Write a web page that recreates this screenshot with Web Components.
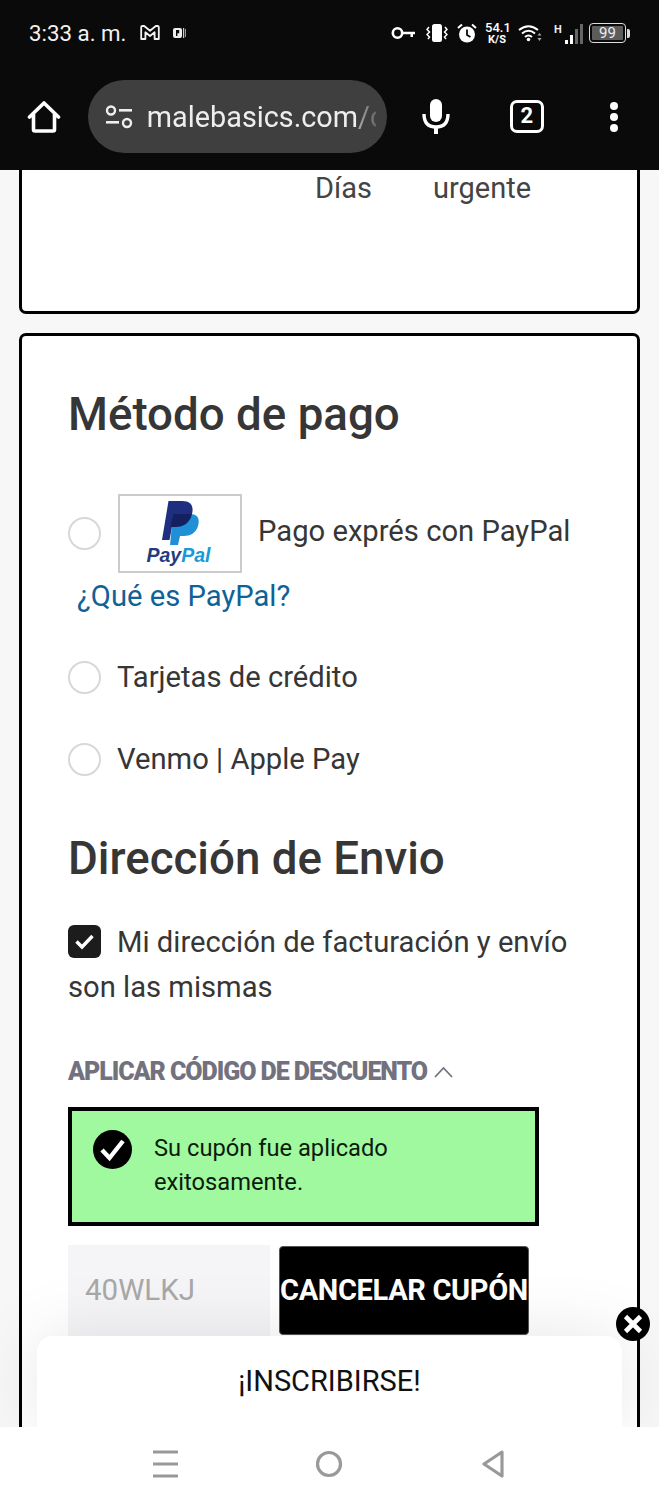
<!DOCTYPE html>
<html lang="es">
<head>
<meta charset="UTF-8">
<title>Método de pago</title>
<style>
  html, body { margin: 0; padding: 0; }
  body { font-family: Roboto, "Liberation Sans", sans-serif; background: #fff; color: #333; }
  .shell { width: 659px; height: 1500px; display: flex; flex-direction: column; overflow: hidden; }
  .title { font-size: 45.7px; font-weight: 500; line-height: 52px; margin: 0; color: #363636; }
</style>
</head>
<body>
<div class="shell">
  <browser-chrome url="malebasics.com/c" tabs="2"></browser-chrome>
  <page-view>
    <info-card>
      <delivery-row></delivery-row>
    </info-card>
    <info-card main>
      <h2 class="title" style="margin-bottom:53px">Método de pago</h2>
      <pay-option logo>Pago exprés con PayPal</pay-option>
      <pay-link>¿Qué es PayPal?</pay-link>
      <pay-option style="margin-top:37px">Tarjetas de crédito</pay-option>
      <pay-option style="margin-top:37px">Venmo | Apple Pay</pay-option>
      <h2 class="title" style="margin-top:51px;margin-bottom:35px">Dirección de Envio</h2>
      <same-address>Mi dirección de facturación y envío son las mismas</same-address>
      <coupon-toggle>APLICAR CÓDIGO DE DESCUENTO</coupon-toggle>
      <coupon-alert>Su cupón fue aplicado exitosamente.</coupon-alert>
      <coupon-form code="40WLKJ">CANCELAR CUPÓN</coupon-form>
    </info-card>
    <subscribe-popup>¡INSCRIBIRSE!</subscribe-popup>
  </page-view>
  <nav-bar></nav-bar>
</div>

<script>
  function shadow(el, html) {
    el.attachShadow({ mode: 'open' }).innerHTML = html;
  }

  class BrowserChrome extends HTMLElement {
    connectedCallback() {
      shadow(this, `
        <style>
          :host { display: block; height: 170px; flex: none; background: #0a0a0a; color: #fff; font-family: Roboto, sans-serif; }
          svg { display: block; }
          .status { height: 66px; display: flex; align-items: center; padding: 0 29px 0 29px; box-sizing: border-box; }
          .time { font-size: 22.3px; color: #f2f2f2; margin-right: 13px; }
          .spacer { flex: 1; }
          .speed { font-size: 11px; font-weight: 700; line-height: 11px; text-align: center; width: 24px; margin: 0 9px 0 8px; }
          .speed b { display: block; font-size: 13px; font-weight: 500; line-height: 12px; }
          .batt { width: 37px; height: 20px; border: 1px solid #ddd; border-radius: 4px; box-sizing: border-box; padding: 2px; margin-left: 4px; }
          .batt span { display: block; height: 100%; background: #5c5c5c; border-radius: 1px; font-size: 15px; line-height: 14px; text-align: center; color: #eee; }
          .nub { width: 3px; height: 9px; background: #ddd; border-radius: 0 2px 2px 0; margin-left: 1px; }
          .bar { height: 104px; display: flex; align-items: flex-start; padding: 14px 0 0 0; box-sizing: border-box; }
          .home { width: 88px; height: 73px; display: flex; align-items: center; justify-content: center; }
          .omni { width: 300px; height: 73px; background: #3f3f3f; border-radius: 37px; display: flex; align-items: center; padding-left: 17px; box-sizing: border-box; overflow: hidden; }
          .url { font-size: 28.8px; color: #eee; margin-left: 14px; width: 229px; white-space: nowrap; flex: none; -webkit-mask-image: linear-gradient(to right, #000 92%, rgba(0,0,0,.35) 100%); mask-image: linear-gradient(to right, #000 92%, rgba(0,0,0,.35) 100%); }
          .url i { font-style: normal; color: #aaa; }
          .act { display: flex; align-items: center; justify-content: center; height: 73px; }
          .tab { width: 34px; height: 33px; border: 3.5px solid #fff; border-radius: 7px; box-sizing: border-box; font-size: 22px; font-weight: 700; line-height: 26px; text-align: center; }
        </style>
        <div class="status">
          <span class="time">3:33 a. m.</span>
          <svg width="20" height="16" viewBox="0 0 20 16" style="margin-right:13px"><path d="M1.2 2.2 Q1.2 1 2.4 1 H4.2 L10 5.8 L15.8 1 H17.6 Q18.8 1 18.8 2.2 V14 H14.6 V7.2 L10 11 L5.4 7.2 V14 H1.2 Z" fill="none" stroke="#f2f2f2" stroke-width="1.8" stroke-linejoin="round"/></svg>
          <svg width="13" height="12" viewBox="0 0 13 12"><rect x="0" y="1" width="9" height="10" rx="2" fill="#eee"/><path d="M3 9 V3 H6.2 V6.2 H4.4 V9 Z" fill="#0a0a0a"/><rect x="10" y="1" width="1.2" height="10" fill="#ccc"/><rect x="12" y="2" width="1" height="8" fill="#999"/></svg>
          <span class="spacer"></span>
          <svg width="24" height="14" viewBox="0 0 24 14" style="margin-right:11px"><circle cx="6.5" cy="7" r="4.7" fill="none" stroke="#fff" stroke-width="2.6"/><path d="M11 5.7 H24 V8.3 H22 V11 H19.5 V8.3 H11 Z" fill="#fff"/></svg>
          <svg width="22" height="20" viewBox="0 0 22 20" style="margin-right:9px"><rect x="6" y="1" width="10" height="18" rx="2.5" fill="#fff"/><path d="M3 4 L1 6.5 L3.5 9 L1 11.5 L3.5 14 L2 16 M19 4 L21 6.5 L18.5 9 L21 11.5 L18.5 14 L20 16" fill="none" stroke="#fff" stroke-width="1.5"/></svg>
          <svg width="20" height="21" viewBox="0 0 20 21"><circle cx="10" cy="11.5" r="8" fill="#fff"/><path d="M10 6.5 V12 L13.5 14" fill="none" stroke="#0a0a0a" stroke-width="1.8"/><path d="M1 5 L5 1.5 M19 5 L15 1.5" stroke="#fff" stroke-width="2"/></svg>
          <span class="speed"><b>54.1</b>K/S</span>
          <svg width="24" height="18" viewBox="0 0 24 18" style="margin-right:12px"><path d="M1 6 Q10.5 -1.5 20 6 M4 9.5 Q10.5 4 17 9.5 M7 13 Q10.5 10 14 13" fill="none" stroke="#fff" stroke-width="2"/><circle cx="10.5" cy="15.5" r="1.8" fill="#fff"/><path d="M21.5 9 L23.5 11.5 H19.5 Z M21.5 17 L23.5 14 H19.5 Z" fill="#aaa"/></svg>
          <svg width="31" height="21" viewBox="0 0 31 21"><text x="0" y="10" fill="#eee" font-size="11" font-weight="700" font-family="Roboto">H</text><rect x="11" y="17" width="3" height="4" fill="#fff"/><rect x="16" y="12" width="3" height="9" fill="#fff"/><rect x="21" y="6" width="3" height="15" fill="#666"/><rect x="26" y="1" width="3" height="20" fill="#666"/></svg>
          <div class="batt"><span>99</span></div>
          <div class="nub"></div>
        </div>
        <div class="bar">
          <div class="home">
            <svg width="34" height="34" viewBox="0 0 34 34"><path d="M2.5 17 L17 3 L31.5 17 M6.5 14 V29.5 Q6.5 31 8 31 H26 Q27.5 31 27.5 29.5 V14" fill="none" stroke="#fff" stroke-width="3.6" stroke-linejoin="round" stroke-linecap="round"/></svg>
          </div>
          <div class="omni">
            <svg width="28" height="24" viewBox="0 0 28 24" style="flex:none"><circle cx="6" cy="5.5" r="4" fill="none" stroke="#eee" stroke-width="2.4"/><rect x="14" y="4" width="13" height="2.6" fill="#eee"/><rect x="1" y="16" width="13" height="2.6" fill="#eee"/><circle cx="22" cy="18" r="4" fill="none" stroke="#eee" stroke-width="2.4"/></svg>
            <span class="url">${this.getAttribute('url').replace('/c', '<i>/c</i>')}</span>
          </div>
          <div class="act" style="width:97px">
            <svg width="28" height="36" viewBox="0 0 28 36"><rect x="8" y="0" width="12" height="23" rx="6" fill="#fff"/><path d="M2 15 Q2 28 14 28 Q26 28 26 15" fill="none" stroke="#fff" stroke-width="3.4"/><rect x="12" y="28" width="4" height="7" fill="#fff"/></svg>
          </div>
          <div class="act" style="width:85px"><div class="tab">${this.getAttribute('tabs')}</div></div>
          <div class="act" style="width:90px">
            <svg width="10" height="32" viewBox="0 0 10 32"><circle cx="5" cy="5" r="4" fill="#fff"/><circle cx="5" cy="16" r="4" fill="#fff"/><circle cx="5" cy="27" r="4" fill="#fff"/></svg>
          </div>
        </div>`);
    }
  }

  class PageView extends HTMLElement {
    connectedCallback() {
      shadow(this, `
        <style>
          :host { display: flex; flex-direction: column; gap: 19px; flex: 1; min-height: 0; overflow: hidden; position: relative; background: #f7f7f7; padding: 0 19px; box-sizing: border-box; }
        </style>
        <slot></slot>`);
    }
  }

  class InfoCard extends HTMLElement {
    connectedCallback() {
      shadow(this, `
        <style>
          :host { display: block; flex: none; background: #fff; border: 3px solid #000; border-radius: 7px; box-sizing: border-box; font-family: Roboto, sans-serif; color: #333; }
          :host(:not([main])) { height: 154px; margin-top: -10px; }
          :host([main]) { padding: 53px 47px 0 46px; height: 1200px; }
        </style>
        <slot></slot>`);
    }
  }

  class DeliveryRow extends HTMLElement {
    connectedCallback() {
      shadow(this, `
        <style>
          :host { display: flex; padding: 8px 0 0 293px; font-size: 29px; line-height: 38px; margin-top: -2px; color: #444; }
          .days { width: 118px; flex: none; }
        </style>
        <span class="days">Días</span><span>urgente</span>`);
    }
  }

  class PayOption extends HTMLElement {
    connectedCallback() {
      const withLogo = this.hasAttribute('logo');
      const logo = withLogo ? `
        <div class="logo">
          <svg width="37" height="44" viewBox="0 0 37 44"><path d="M6.5 0 H20 C29 0 32 5 30 13 C28 22 21 26 14 26 H10 L7.5 39 H0 Z" fill="#1d2f7e"/><path d="M11 13 H28 C36 13 38 18 36 25 C34 32 28 35 22 35 H18 L16 44 H8 Z" fill="#1f8fd6"/><path d="M11 13 H30 C28 22 21 26 14 26 H8.5 Z" fill="#14205f"/></svg>
          <span><b>Pay</b><i>Pal</i></span>
        </div>` : '';
      shadow(this, `
        <style>
          :host { display: flex; align-items: center; font-size: 29.2px; line-height: 45px; color: #363636; font-family: Roboto, sans-serif; }
          .radio { width: 33px; height: 33px; border: 2px solid #d8d8d8; border-radius: 50%; box-sizing: border-box; background: #fff; margin-right: 17px; flex: none; }
          .logo { width: 124px; height: 79px; border: 2px solid #ccc; box-sizing: border-box; background: #fff; margin-right: 17px; flex: none; display: flex; flex-direction: column; align-items: center; padding-top: 5px; }
          .logo svg { display: block; margin-left: 1px; }
          .logo span { font: italic 700 19.5px/20px "Liberation Sans", sans-serif; margin-left: -3px; }
          .logo b { color: #253b80; font-weight: 700; }
          .logo i { color: #179bd7; }
          .label { margin-left: -1px; }
          .label.up { margin-top: -4px; }
        </style>
        <div class="radio"></div>${logo}<span class="label${withLogo ? ' up' : ''}"><slot></slot></span>`);
    }
  }

  class PayLink extends HTMLElement {
    connectedCallback() {
      shadow(this, `
        <style>
          :host { display: block; font-size: 29.2px; line-height: 44px; color: #0f6296; padding-left: 9px; margin-top: 1px; font-family: Roboto, sans-serif; }
        </style>
        <slot></slot>`);
    }
  }

  class SameAddress extends HTMLElement {
    connectedCallback() {
      shadow(this, `
        <style>
          :host { display: block; font-size: 29.2px; line-height: 44.5px; color: #363636; font-family: Roboto, sans-serif; }
          .box { display: inline-block; width: 33px; height: 33px; border-radius: 6px; background: #1c1c1c; margin-right: 16px; vertical-align: -6px; }
          svg { display: block; margin: 8px 6px; }
        </style>
        <span class="box"><svg width="21" height="17" viewBox="0 0 21 17"><path d="M2.5 8.5 L8 14 L18.5 3" fill="none" stroke="#fff" stroke-width="3.4"/></svg></span><slot></slot>`);
    }
  }

  class CouponToggle extends HTMLElement {
    connectedCallback() {
      shadow(this, `
        <style>
          :host { display: flex; align-items: center; font-size: 25px; font-weight: 900; line-height: 30px; letter-spacing: -1.05px; color: #72727f; margin-top: 48px; font-family: Roboto, sans-serif; white-space: nowrap; }
          svg { margin-left: 7px; flex: none; }
        </style>
        <slot></slot>
        <svg width="19" height="12" viewBox="0 0 19 12"><path d="M1 11 L9.5 2 L18 11" fill="none" stroke="#72727f" stroke-width="1.8"/></svg>`);
    }
  }

  class CouponAlert extends HTMLElement {
    connectedCallback() {
      shadow(this, `
        <style>
          :host { display: flex; width: 471px; height: 119px; box-sizing: border-box; border: 4px solid #000; background: #a0f99f; margin-top: 20px; padding: 19px 0 0 21px; font-size: 23.7px; line-height: 34px; color: #0c1c0c; font-family: Roboto, sans-serif; }
          svg { flex: none; margin-right: 22px; }
          div { width: 280px; margin-top: 1px; }
        </style>
        <svg width="39" height="39" viewBox="0 0 39 39"><circle cx="19.5" cy="19.5" r="19.5" fill="#000"/><path d="M9 20 L16.5 28 L30 11" fill="none" stroke="#fff" stroke-width="4.4"/></svg>
        <div><slot></slot></div>`);
    }
  }

  class CouponForm extends HTMLElement {
    connectedCallback() {
      shadow(this, `
        <style>
          :host { display: flex; align-items: flex-start; margin-top: 19px; font-family: Roboto, sans-serif; }
          .code { width: 202px; height: 110px; box-sizing: border-box; padding: 24px 0 0 17px; background: #f5f5f7; font-size: 29.5px; line-height: 42px; color: #a8a8a8; margin-right: 9px; }
          .btn { width: 250px; height: 89px; margin-top: 1px; background: #000; border: 1px solid #555; border-radius: 4px; box-sizing: border-box; color: #fff; font-size: 29px; font-weight: 700; line-height: 86px; letter-spacing: -.35px; text-align: center; white-space: nowrap; }
        </style>
        <div class="code">${this.getAttribute('code')}</div>
        <div class="btn"><slot></slot></div>`);
    }
  }

  class SubscribePopup extends HTMLElement {
    connectedCallback() {
      shadow(this, `
        <style>
          :host { position: absolute; left: 37px; right: 37px; bottom: 0; height: 91px; background: #fff; border-radius: 16px 16px 0 0; box-shadow: 0 0 70px rgba(0,0,0,.1); text-align: center; font-size: 29px; line-height: 90px; color: #111; font-family: Roboto, sans-serif; }
          .close { position: absolute; right: -28px; top: -29px; width: 34px; height: 34px; }
          svg { display: block; }
        </style>
        <slot></slot>
        <div class="close"><svg width="34" height="34" viewBox="0 0 34 34"><circle cx="17" cy="17" r="17" fill="#000"/><path d="M9.5 9.5 L24.5 24.5 M24.5 9.5 L9.5 24.5" stroke="#fff" stroke-width="4.6"/></svg></div>`);
    }
  }

  class NavBar extends HTMLElement {
    connectedCallback() {
      shadow(this, `
        <style>
          :host { display: flex; justify-content: center; align-items: center; height: 73px; flex: none; background: #fff; padding-right: 1px; box-sizing: border-box; }
          div { width: 164px; display: flex; justify-content: center; }
          svg { display: block; }
        </style>
        <div><svg width="25" height="28" viewBox="0 0 25 28"><path d="M0 2 H25 M0 14 H25 M0 26 H25" stroke="#999" stroke-width="3.2"/></svg></div>
        <div><svg width="28" height="28" viewBox="0 0 28 28"><circle cx="14" cy="14" r="11.5" fill="none" stroke="#999" stroke-width="3.2"/></svg></div>
        <div><svg width="22" height="30" viewBox="0 0 22 30"><path d="M20 3 L2 15 L20 27 Z" fill="none" stroke="#999" stroke-width="3.2" stroke-linejoin="round"/></svg></div>`);
    }
  }

  customElements.define('browser-chrome', BrowserChrome);
  customElements.define('page-view', PageView);
  customElements.define('info-card', InfoCard);
  customElements.define('delivery-row', DeliveryRow);
  customElements.define('pay-option', PayOption);
  customElements.define('pay-link', PayLink);
  customElements.define('same-address', SameAddress);
  customElements.define('coupon-toggle', CouponToggle);
  customElements.define('coupon-alert', CouponAlert);
  customElements.define('coupon-form', CouponForm);
  customElements.define('subscribe-popup', SubscribePopup);
  customElements.define('nav-bar', NavBar);
</script>
</body>
</html>
